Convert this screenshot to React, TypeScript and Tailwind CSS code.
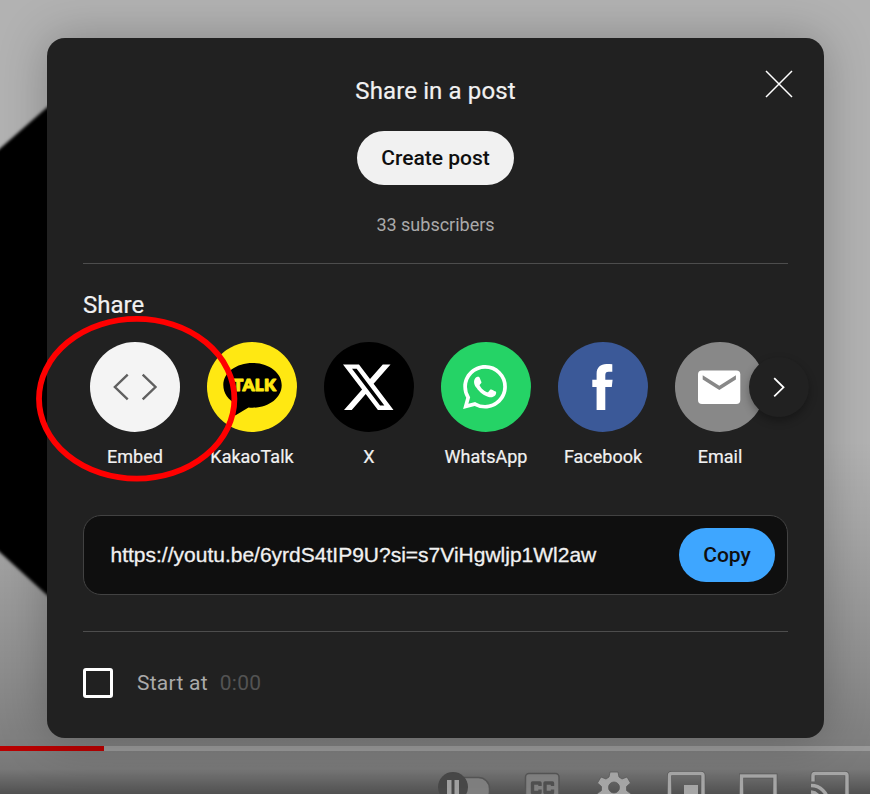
import type { ReactNode } from "react";
import { SiWhatsapp, SiX } from "react-icons/si";

type Target = { name: string; color: string; icon: ReactNode };

const EmbedIcon = () => (
  <svg viewBox="0 0 90 90" className="size-full" fill="none" stroke="#606060" strokeWidth="2.4">
    <path d="M37.7 32.6 24.9 45l12.8 12.4M52.7 32.6 65.5 45 52.7 57.4" />
  </svg>
);

const KakaoIcon = () => (
  <svg viewBox="0 0 90 90" className="size-full">
    <path
      d="M45.500 21C29.400 21 16.300 30.500 16.300 43c0 8.300 5.200 15.100 12.700 19l-1.200 10.500c-.1.900.6 1.100 1.300.6L41.500 65.400c1.300.2 2.600.3 4 .3 16.100 0 29.200-9.800 29.200-22.500S61.600 21 45.500 21Z"
      fill="#000"
    />
    <text
      x="26"
      y="48.900"
      textLength="43"
      lengthAdjust="spacing"
      fill="#ffe812"
      stroke="#ffe812"
      strokeWidth=".9"
      strokeLinejoin="round"
      className="font-['Lato',sans-serif] text-[17px] font-extrabold"
    >
      TALK
    </text>
  </svg>
);

const FacebookIcon = () => (
  <svg viewBox="0 0 90 90" className="size-full" fill="#fff">
    <path d="M54.300 22.300c-1.500-.2-3.500-.3-5.800-.3C42.500 22 38.600 25.500 38.600 31.800v5.900h-4.300v7.200h4.300V68h8.700V44.900h6.500l.8-7.200h-7.300v-4.400c0-2.500.9-3.600 3.300-3.600h3.700Z" />
  </svg>
);

const EmailIcon = () => (
  <svg viewBox="0 0 90 90" className="size-full">
    <rect x="23" y="28.600" width="42.300" height="33.400" rx="4" fill="#fff" />
    <path d="m27.700 33.300 16.600 10.400 16.600-10.400v4.300L44.300 48 27.700 37.600Z" fill="#888" />
  </svg>
);

const targets: Target[] = [
  { name: "Embed", color: "bg-[#f4f4f4]", icon: <EmbedIcon /> },
  { name: "KakaoTalk", color: "bg-[#ffe812]", icon: <KakaoIcon /> },
  { name: "X", color: "bg-black", icon: <SiX className="size-[50.500px] text-white" /> },
  { name: "WhatsApp", color: "bg-[#25d366]", icon: <SiWhatsapp className="mr-px size-[44px] text-white" /> },
  { name: "Facebook", color: "bg-[#3b5998]", icon: <FacebookIcon /> },
  { name: "Email", color: "bg-[#888888]", icon: <EmailIcon /> },
];

function VideoBackdrop() {
  return (
    <div className="absolute inset-0 bg-[#b2b2b2]">
      <svg viewBox="0 0 870 794" className="size-full">
        <path d="M-20 166 60 96V607L-20 534Z" fill="#000" className="blur-[1.500px]" />
      </svg>
      <div className="absolute inset-x-0 top-[440px] bottom-0 bg-[linear-gradient(to_bottom,transparent_0%,rgba(0,0,0,.07)_25%,rgba(0,0,0,.2)_63%,rgba(0,0,0,.29)_86%,rgba(0,0,0,.33)_93%,rgba(0,0,0,.55)_100%)]" />
    </div>
  );
}

function PlayerControls() {
  return (
    <div className="relative">
      <div className="h-[5px] bg-[#999]">
        <div className="h-full w-[104px] bg-[#b90000]" />
      </div>
      <div className="flex h-[43px] justify-end">
        <svg viewBox="430 751 440 43" className="h-[43px] w-[440px]">
          <rect x="441" y="777.500" width="48.500" height="25" rx="11" fill="#7f7f7f" stroke="#555" strokeWidth="1.500" />
          <circle cx="453" cy="787" r="15" fill="#484848" />
          <path d="M447 780h4.500v20H447zM454.500 780h4.500v20h-4.500z" fill="#a0a0a0" />
          <rect x="525.500" y="773.500" width="33.500" height="30" rx="3.500" fill="#808080" stroke="#555" strokeWidth="1.500" />
          <path
            d="M540 786V783H532.500v9.500H540V789.500M552.500 786V783H545v9.500h7.500V789.500"
            fill="none"
            stroke="#505050"
            strokeWidth="3.400"
            strokeLinejoin="round"
          />
          <path
            d="M610 772h8l1 5 3 2 5-2 3.500 6-4 3.500v4l4 3v5h-33v-5l4-3v-4l-4-3.500 3.500-6 5 2 3-2Zm4 10a5.500 5.500 0 1 0 0 11 5.500 5.500 0 0 0 0-11Z"
            fill="#a6a6a6"
            stroke="#5b5b5b"
            strokeWidth=".8"
            fillRule="evenodd"
          />
          <g fill="none" stroke="#5b5b5b" strokeWidth="5">
            <rect x="669.500" y="773.500" width="33.500" height="35" rx="2" />
            <rect x="741.500" y="776" width="33.500" height="35" />
            <path d="M813 781.500V775.500q0-2 2-2h30q2 0 2 2V800" />
          </g>
          <g fill="none" stroke="#a6a6a6" strokeWidth="3.400">
            <rect x="669.500" y="773.500" width="33.500" height="35" rx="2" />
            <rect x="741.500" y="776" width="33.500" height="35" />
            <path d="M813 781.500V775.500q0-2 2-2h30q2 0 2 2V800" />
            <path d="M811 785.500a17 17 0 0 1 17 17M811 792a11 11 0 0 1 10 10" />
          </g>
          <path d="M684 785h14v12h-14z" fill="#a6a6a6" />
        </svg>
      </div>
    </div>
  );
}

function ShareTarget({ name, color, icon }: Target) {
  return (
    <button className="flex w-[117px] flex-col items-center">
      <span className={`flex size-[90px] items-center justify-center rounded-full ${color}`}>{icon}</span>
      <span className="mt-[11px] mb-px pl-px text-[18px] leading-[27px] text-[#f1f1f1] [-webkit-text-stroke:0.2px_#f1f1f1]">
        {name}
      </span>
    </button>
  );
}

function ShareDialog() {
  return (
    <section className="absolute top-[38px] left-[47px] flex h-[700px] w-[777px] flex-col rounded-[18px] bg-[#212121] px-9 shadow-[0_0_48px_rgba(0,0,0,0.25)]">
      <button className="absolute top-[31px] right-[30px]" aria-label="Close">
        <svg viewBox="0 0 30 30" className="size-[30px]" stroke="#fff" strokeWidth="1.500">
          <path d="m2 2 26 26M28 2 2 28" />
        </svg>
      </button>
      <header className="flex flex-col items-center pt-[35px]">
        <h2 className="text-[24px] leading-9 tracking-[0.12px] text-[#f1f1f1] [-webkit-text-stroke:0.2px_#f1f1f1]">
          Share in a post
        </h2>
        <button className="mt-[22px] h-[54px] w-[157px] rounded-full bg-[#f1f1f1] pt-[2px] text-[21px] font-medium text-[#0f0f0f]">
          Create post
        </button>
        <p className="mt-[26px] text-[18px] leading-[27px] text-[#aaa]">33 subscribers</p>
      </header>
      <hr className="mt-[25px] border-[#4d4d4d]" />
      <h3 className="mt-[23px] text-[24px] leading-9 text-[#f1f1f1] [-webkit-text-stroke:0.2px_#f1f1f1]">Share</h3>
      <div className="relative mt-[19px] -ml-[7px] flex">
        {targets.map((target) => (
          <ShareTarget key={target.name} {...target} />
        ))}
        <button
          className="absolute top-[15px] left-[673px] size-[60px] rounded-full bg-[#212121] shadow-[0_4px_8px_rgba(0,0,0,0.3)]"
          aria-label="Next"
        >
          <svg viewBox="0 0 60 60" className="size-full" fill="none" stroke="#fff" strokeWidth="1.800">
            <path d="m25.200 21.200 9.300 9.100-9.300 9.100" />
          </svg>
        </button>
      </div>
      <div className="mt-[44px] flex h-[80px] items-center justify-between rounded-[18px] border border-[#424242] bg-[#0f0f0f] pr-3 pl-[26.500px]">
        <span className="font-['Liberation_Sans',Arial,sans-serif] text-[21px] text-[#f1f1f1] [-webkit-text-stroke:0.3px_#f1f1f1]">
          https://youtu.be/6yrdS4tIP9U?si=s7ViHgwljp1Wl2aw
        </span>
        <button className="h-[54px] w-[96px] rounded-full bg-[#3ea6ff] pt-[2px] text-[21px] font-medium text-[#0f0f0f]">
          Copy
        </button>
      </div>
      <hr className="mt-[36px] border-[#4d4d4d]" />
      <div className="mt-[36px] flex items-center text-[21px] leading-[30px] tracking-[0.25px]">
        <span className="size-[30px] rounded-[3px] border-[3px] border-white" />
        <span className="ml-6 text-[#aaa]">Start at</span>
        <span className="ml-3 text-[#535353]">0:00</span>
      </div>
    </section>
  );
}

export default function App() {
  return (
    <main className="relative flex h-[794px] w-[870px] flex-col justify-end overflow-hidden font-['Roboto',sans-serif]">
      <VideoBackdrop />
      <PlayerControls />
      <ShareDialog />
      <svg viewBox="0 0 870 794" className="pointer-events-none absolute inset-0 size-full">
        <ellipse cx="136.700" cy="398.800" rx="97.700" ry="79.900" fill="none" stroke="#f00" strokeWidth="5.800" />
      </svg>
    </main>
  );
}
